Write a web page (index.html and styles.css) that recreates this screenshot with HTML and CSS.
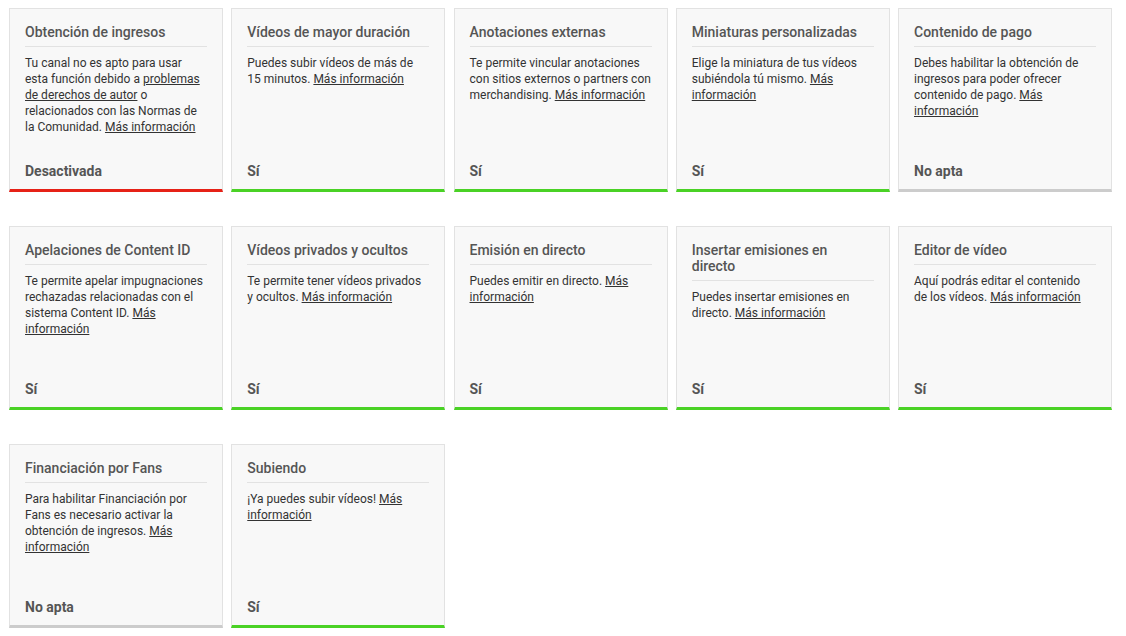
FILE: index.html
```html
<!DOCTYPE html>
<html lang="es">
<head>
    <meta charset="UTF-8">
    <title>Estado y funciones</title>
    <link rel="stylesheet" href="styles.css">
</head>
<body>
    <div class="features">
        <div class="feature off">
            <h3>Obtención de ingresos</h3>
            <p>Tu canal no es apto para usar esta función debido a <a href="#">problemas de derechos de autor</a> o relacionados con las Normas de la Comunidad. <a href="#">Más información</a></p>
            <div class="status">Desactivada</div>
        </div>
        <div class="feature on">
            <h3>Vídeos de mayor duración</h3>
            <p>Puedes subir vídeos de más de 15 minutos. <a href="#">Más información</a></p>
            <div class="status">Sí</div>
        </div>
        <div class="feature on">
            <h3>Anotaciones externas</h3>
            <p>Te permite vincular anotaciones con sitios externos o partners con merchandising. <a href="#">Más información</a></p>
            <div class="status">Sí</div>
        </div>
        <div class="feature on">
            <h3>Miniaturas personalizadas</h3>
            <p>Elige la miniatura de tus vídeos subiéndola tú mismo. <a href="#">Más información</a></p>
            <div class="status">Sí</div>
        </div>
        <div class="feature na">
            <h3>Contenido de pago</h3>
            <p>Debes habilitar la obtención de ingresos para poder ofrecer contenido de pago. <a href="#">Más información</a></p>
            <div class="status">No apta</div>
        </div>

        <div class="feature on">
            <h3>Apelaciones de Content ID</h3>
            <p>Te permite apelar impugnaciones rechazadas relacionadas con el sistema Content ID. <a href="#">Más información</a></p>
            <div class="status">Sí</div>
        </div>
        <div class="feature on">
            <h3>Vídeos privados y ocultos</h3>
            <p>Te permite tener vídeos privados y ocultos. <a href="#">Más información</a></p>
            <div class="status">Sí</div>
        </div>
        <div class="feature on">
            <h3>Emisión en directo</h3>
            <p>Puedes emitir en directo. <a href="#">Más información</a></p>
            <div class="status">Sí</div>
        </div>
        <div class="feature on">
            <h3>Insertar emisiones en directo</h3>
            <p>Puedes insertar emisiones en directo. <a href="#">Más información</a></p>
            <div class="status">Sí</div>
        </div>
        <div class="feature on">
            <h3>Editor de vídeo</h3>
            <p>Aquí podrás editar el contenido de los vídeos. <a href="#">Más información</a></p>
            <div class="status">Sí</div>
        </div>

        <div class="feature na">
            <h3>Financiación por Fans</h3>
            <p>Para habilitar Financiación por Fans es necesario activar la obtención de ingresos. <a href="#">Más información</a></p>
            <div class="status">No apta</div>
        </div>
        <div class="feature on">
            <h3>Subiendo</h3>
            <p>¡Ya puedes subir vídeos! <a href="#">Más información</a></p>
            <div class="status">Sí</div>
        </div>
    </div>
</body>
</html>
```

FILE: styles.css
```css
body {
    margin: 0;
    padding: 8px 9px;
    font-family: Roboto, "Liberation Sans", Arial, sans-serif;
    font-size: 12px;
    color: #333;
    background-color: #fff;
}
.features {
    display: grid;
    grid-template-columns: repeat(5, 214px);
    column-gap: 8.25px;
    row-gap: 34px;
}
.feature {
    box-sizing: border-box;
    height: 184px;
    display: flex;
    flex-direction: column;
    padding: 15px 15px 10px;
    background-color: #f8f8f8;
    border: 1px solid #e2e2e2;
    border-bottom: 3px solid #ccc;
}
.feature.on {
    border-bottom-color: #4ad225;
}
.feature.off {
    border-bottom-color: #e62117;
}
.feature h3 {
    margin: 0;
    padding-bottom: 6px;
    font-size: 14px;
    font-weight: 500;
    line-height: 16px;
    color: #555;
    border-bottom: 1px solid #e2e2e2;
}
.feature p {
    margin: 8px 0 0;
    line-height: 16px;
    color: #333;
}
.feature a {
    color: #333;
    text-decoration: underline;
}
.status {
    margin-top: auto;
    font-size: 14px;
    font-weight: 700;
    line-height: 16px;
    color: #555;
}
```
